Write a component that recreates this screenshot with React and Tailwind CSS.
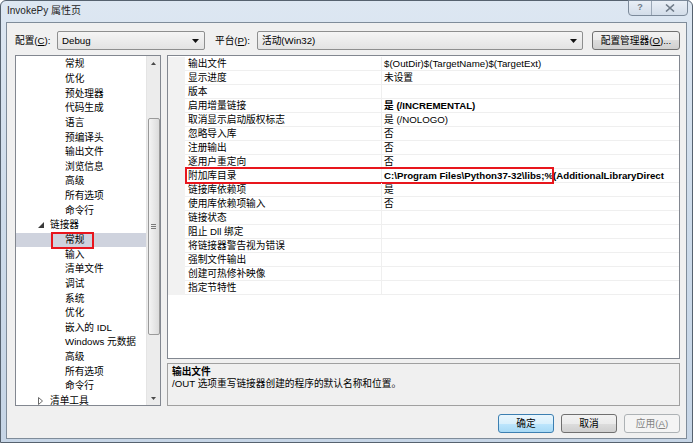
import React from "react";

const treeItems = [
  { t: "常规", l: 2 },
  { t: "优化", l: 2 },
  { t: "预处理器", l: 2 },
  { t: "代码生成", l: 2 },
  { t: "语言", l: 2 },
  { t: "预编译头", l: 2 },
  { t: "输出文件", l: 2 },
  { t: "浏览信息", l: 2 },
  { t: "高级", l: 2 },
  { t: "所有选项", l: 2 },
  { t: "命令行", l: 2 },
  { t: "链接器", l: 1, exp: "open" },
  { t: "常规", l: 2, sel: true },
  { t: "输入", l: 2 },
  { t: "清单文件", l: 2 },
  { t: "调试", l: 2 },
  { t: "系统", l: 2 },
  { t: "优化", l: 2 },
  { t: "嵌入的 IDL", l: 2 },
  { t: "Windows 元数据", l: 2 },
  { t: "高级", l: 2 },
  { t: "所有选项", l: 2 },
  { t: "命令行", l: 2 },
  { t: "清单工具", l: 1, exp: "closed" },
];

const props = [
  { n: "输出文件", v: "$(OutDir)$(TargetName)$(TargetExt)" },
  { n: "显示进度", v: "未设置" },
  { n: "版本", v: "" },
  { n: "启用增量链接", v: "是 (/INCREMENTAL)", b: true },
  { n: "取消显示启动版权标志", v: "是 (/NOLOGO)" },
  { n: "忽略导入库", v: "否" },
  { n: "注册输出", v: "否" },
  { n: "逐用户重定向", v: "否" },
  { n: "附加库目录", v: "C:\\Program Files\\Python37-32\\libs;%(AdditionalLibraryDirect", b: true, mark: true },
  { n: "链接库依赖项", v: "是" },
  { n: "使用库依赖项输入", v: "否" },
  { n: "链接状态", v: "" },
  { n: "阻止 Dll 绑定", v: "" },
  { n: "将链接器警告视为错误", v: "" },
  { n: "强制文件输出", v: "" },
  { n: "创建可热修补映像", v: "" },
  { n: "指定节特性", v: "" },
];

const btnBase = "h-[19px] w-[56px] rounded-[3px] border flex items-center justify-center";

const DropArrow = () => (
  <svg width="7" height="4" viewBox="0 0 7 4">
    <polygon points="0,0 7,0 3.5,4" fill="#111" />
  </svg>
);

const App = () => {
  return (
    <div className="w-[693px] h-[443px] font-['Liberation_Sans','Noto_Sans_CJK_SC',sans-serif] text-[9.7px] text-black">
      {/* window frame */}
      <div className="w-full h-full flex flex-col border border-[#56626f] rounded-t-[6px] bg-[#cad9ea] bg-gradient-to-b from-[#dde7f2] via-[#cddbea] to-[#c6d5e6]">
        {/* title bar */}
        <div className="h-[21px] flex items-start justify-between shrink-0">
          <div className="pl-[6px] pt-[4px] text-[10px] leading-[12px] text-[#1e1e1e]">InvokePy 属性页</div>
          <div className="mr-[4px] mt-[-1px] flex h-[16px] rounded-b-[4px] border border-[#7c8a9a] bg-gradient-to-b from-[#e9eff6] to-[#d3dde9] overflow-hidden">
            <div className="w-[23px] flex items-center justify-center border-r border-[#9aa7b6] text-[9px] font-bold text-[#6f7b88]">?</div>
            <div className="w-[35px] flex items-center justify-center">
              <svg width="10" height="8" viewBox="0 0 10 8">
                <path d="M1 0.5 L9 7.5 M9 0.5 L1 7.5" stroke="#6f7b88" strokeWidth="1.6" />
              </svg>
            </div>
          </div>
        </div>

        {/* client */}
        <div className="flex-1 mx-[5px] mb-[3px] border border-[#7f8c9a] bg-[#f0f0f0] flex flex-col pl-[8px] pr-[6px] pt-[8px]">
          {/* config row */}
          <div className="flex items-center h-[19px] leading-[12px]">
            <div className="w-[42px] shrink-0">配置(<span className="underline">C</span>):</div>
            <div className="w-[148px] shrink-0 h-full rounded-[2px] border border-[#8e8f8f] bg-gradient-to-b from-[#f5f5f5] to-[#e3e3e3] flex items-center justify-between pl-[4px] pr-[5px]">
              <span>Debug</span>
              <DropArrow />
            </div>
            <div className="w-[42px] shrink-0 ml-[10px]">平台(<span className="underline">P</span>):</div>
            <div className="w-[326px] shrink-0 h-full rounded-[2px] border border-[#8e8f8f] bg-gradient-to-b from-[#f5f5f5] to-[#e3e3e3] flex items-center justify-between pl-[4px] pr-[5px]">
              <span>活动(Win32)</span>
              <DropArrow />
            </div>
            <div className="flex-1 ml-[9px] h-full rounded-[3px] border border-[#707070] bg-[linear-gradient(#f2f2f2_0%,#ebebeb_50%,#dddddd_50%,#cfcfcf_100%)] flex items-center justify-center whitespace-nowrap">
              配置管理器(<span className="underline">O</span>)...
            </div>
          </div>

          {/* main area */}
          <div className="mt-[5px] h-[351px] flex gap-[6px]">
            {/* tree */}
            <div className="w-[146px] shrink-0 h-full border border-[#828790] bg-white flex overflow-hidden">
              <div className="flex-1 min-w-0 pt-[1px] overflow-hidden">
                {treeItems.map((it, i) => (
                  <div
                    key={i}
                    className={`relative h-[14.65px] flex items-center leading-[12px] whitespace-nowrap ${
                      it.sel ? "bg-[#cfd3de]" : ""
                    } ${it.l === 2 ? "pl-[49px]" : "pl-[22px]"}`}
                  >
                    {it.exp === "open" && (
                      <span className="w-[12px] flex items-center">
                        <svg width="6" height="6" viewBox="0 0 6 6">
                          <polygon points="6,0 6,6 0,6" fill="#3a3a3a" />
                        </svg>
                      </span>
                    )}
                    {it.exp === "closed" && (
                      <span className="w-[12px] flex items-center">
                        <svg width="5" height="8" viewBox="0 0 5 8">
                          <polygon points="0.5,0.5 4.5,4 0.5,7.5" fill="none" stroke="#6a6a6a" />
                        </svg>
                      </span>
                    )}
                    <span>{it.t}</span>
                    {it.sel && (
                      <div className="absolute left-[35px] top-[-1px] w-[43px] h-[17px] border-2 border-[#e8161d]" />
                    )}
                  </div>
                ))}
              </div>
              {/* scrollbar */}
              <div className="w-[14px] shrink-0 h-full bg-[#ececec] border-l border-[#e4e4e4] flex flex-col items-center">
                <div className="h-[14px] flex items-center justify-center">
                  <svg width="5" height="3" viewBox="0 0 5 3">
                    <polygon points="0,3 5,3 2.5,0" fill="#4a4a4a" />
                  </svg>
                </div>
                <div className="h-[48px]" />
                <div className="w-[12px] h-[217px] rounded-[2px] border border-[#9a9a9a] bg-gradient-to-r from-[#f4f4f4] to-[#dcdcdc] flex flex-col items-center justify-center gap-[1px]">
                  <div className="w-[5px] h-[1px] bg-[#7a7a7a]" />
                  <div className="w-[5px] h-[1px] bg-[#7a7a7a]" />
                  <div className="w-[5px] h-[1px] bg-[#7a7a7a]" />
                </div>
                <div className="flex-1" />
                <div className="h-[14px] flex items-center justify-center">
                  <svg width="5" height="3" viewBox="0 0 5 3">
                    <polygon points="0,0 5,0 2.5,3" fill="#4a4a4a" />
                  </svg>
                </div>
              </div>
            </div>

            {/* right column */}
            <div className="flex-1 min-w-0 flex flex-col gap-[4px]">
              {/* property grid */}
              <div className="h-[304px] border border-[#828790] bg-white pt-[1px] overflow-hidden">
                {props.map((p, i) => (
                  <div key={i} className="relative h-[14px] flex leading-[13px] whitespace-nowrap">
                    <div className="w-[17px] shrink-0 h-full bg-[#f2f2f2]" />
                    <div className="w-[197px] shrink-0 h-full pl-[3px] border-b border-r border-[#efefef]">{p.n}</div>
                    <div className={`flex-1 min-w-0 h-full pl-[2px] border-b border-[#efefef] overflow-hidden ${p.b ? "font-bold" : ""}`}>
                      {p.v}
                    </div>
                    {p.mark && (
                      <div className="absolute left-[17px] top-[-2px] w-[369px] h-[17px] border-2 border-[#e8161d]" />
                    )}
                  </div>
                ))}
              </div>
              {/* description */}
              <div className="flex-1 border border-[#a0a0a0] bg-[#f0f0f0] pl-[4px] pt-[2px] leading-[12px]">
                <div className="font-bold">输出文件</div>
                <div>/OUT 选项重写链接器创建的程序的默认名称和位置。</div>
              </div>
            </div>
          </div>

          {/* dialog buttons */}
          <div className="mt-[8px] flex justify-end gap-[7px] leading-[12px]">
            <div className={`${btnBase} border-[#3c7fb1] bg-[linear-gradient(#eaf6fd_0%,#d9f0fc_50%,#bee6fd_50%,#a7d9f5_100%)]`}>确定</div>
            <div className={`${btnBase} border-[#707070] bg-[linear-gradient(#f2f2f2_0%,#ebebeb_50%,#dddddd_50%,#cfcfcf_100%)]`}>取消</div>
            <div className={`${btnBase} border-[#adb2b5] bg-[#f4f4f4] text-[#838383]`}>
              应用(<span className="underline">A</span>)
            </div>
          </div>
        </div>
      </div>
    </div>
  );
};

export default App;
